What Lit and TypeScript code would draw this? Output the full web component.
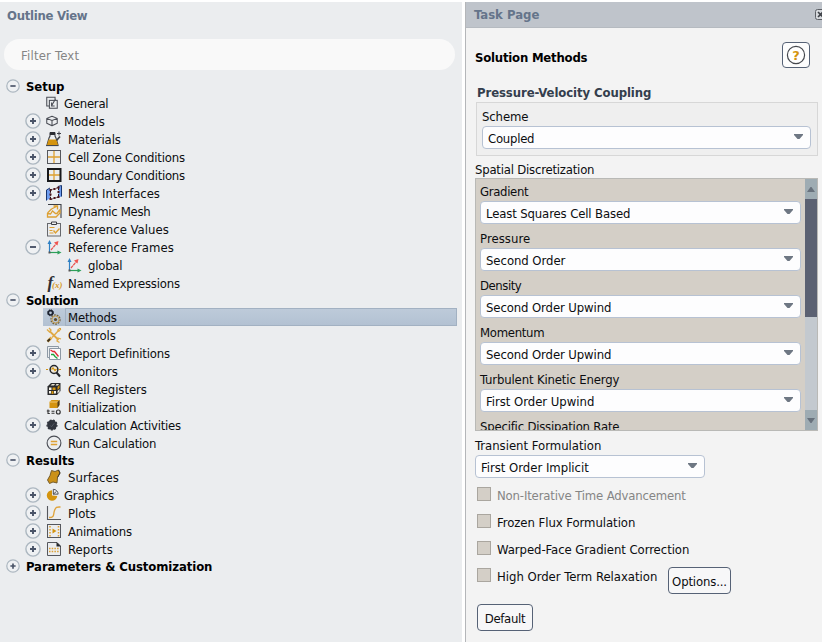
import { LitElement, html, css, svg, nothing, SVGTemplateResult } from "lit";
import { customElement, property, state } from "lit/decorators.js";
import { classMap } from "lit/directives/class-map.js";

const gold = "#d4940f";
const ink = "#3c3f46";

const icons: Record<string, SVGTemplateResult> = {
  general: svg`<g fill="none" stroke="#4a4d55" stroke-width="1.200"><path d="M4.500 11.500H2v-10h9.500V4"/><rect x="5" y="5" width="9" height="9"/><path d="M12 3.500 7.500 11M7.500 7.500v4h3.500"/></g>`,
  models: svg`<g fill="none" stroke="#4a4d55" stroke-width="1.200" stroke-linejoin="round"><path d="M8 2.500 14 5v5.500L8 13.500 2 10.500V5zM2 5l6 2.500L14 5M8 7.500v6"/></g>`,
  materials: svg`<path d="M4 2h5v3l1 2 2 7H1l2-7 1-2z" fill="#eceef0" stroke="${ink}" stroke-width="1.1"/><path d="M4 1h5v3H4z" fill="#2b2d33"/><path d="M2.600 8.500h7.800l1.600 5.500H1z" fill="${gold}"/><path d="M0 14.600h12.500" stroke="${ink}"/><path d="m10.500 9.500 3.500-4" stroke="${ink}" stroke-width="1.600"/><path d="M13 .5v4M11 2.500h4" stroke="${ink}"/>`,
  cell: svg`<path d="M8 1.500v13M1.500 8h13" stroke="#dda032" stroke-width="1.300"/><rect x="1.500" y="1.500" width="13" height="13" fill="none" stroke="#55575d"/>`,
  boundary: svg`<path d="M8 1.500v13M1.500 8h13" stroke="#dda032" stroke-width="1.300"/><rect x="2" y="2" width="12.500" height="12" fill="none" stroke="#17181b" stroke-width="2"/>`,
  mesh: svg`<path d="M.5 5 4 3.500v10L.5 15.500z" fill="#6e9df0"/><path d="m11.500 3 4-2.500v11l-4 1.500z" fill="#6e9df0"/><path d="M.5 15.500V5L4 3M12 1.500l3.500-1v11" fill="none" stroke="#15346f"/><path d="m4.500 5 8-2.500v9.500l-8 2.500z" fill="#eceef0" stroke="#2b0d12" stroke-dasharray="2 1"/><path d="M3.500 4h2v2h-2zM7.500 3h2v2h-2zM11.500 1.500h2v2h-2zM3.500 8.500h2v2h-2zM11.500 6h2v2h-2zM3.500 13h2v2h-2zM7.500 12h2v2h-2zM11.500 11h2v2h-2z" fill="#4a1118"/>`,
  dynamic: svg`<path d="M2 1.500h13V15" fill="none" stroke="${ink}" stroke-width="1.100"/><path d="M1.500 10v4h8.500l4-4V6.500M1.500 10l4-4M1.500 10.500 4.500 11l2-3 3 2.500h1.500l3-4M5.500 6l5-2.500M7.500 3h4v3.500" fill="none" stroke="#dda032" stroke-width="1.300"/>`,
  refvalues: svg`<rect x="1.500" y="2.500" width="13" height="12.500" fill="none" stroke="#66686d"/><path d="M5.500 1h5v2.500h-5z" fill="#eceef0" stroke="${ink}"/><path d="M3.500 6.500h5M3.500 9.500h3M3.500 12h4" stroke="#dda032"/><path d="m7.500 9.500 2 2.500 4-4.500" fill="none" stroke="#dda032" stroke-width="1.400"/>`,
  frames: svg`<path d="M3.500 4v9" stroke="#2f80c4" stroke-width="1.200"/><path d="M1.500 5 3.500 1l2 4z" fill="#2f80c4"/><path d="M4 13.500h8" stroke="#2da05a" stroke-width="1.200"/><path d="m11.500 11.500 4 2-4 2z" fill="#2da05a"/><path d="m5 11 5.500-6.500" stroke="#e8524f" stroke-width="1.200" stroke-dasharray="3 .6"/><path d="m8 3.500 4.500-1.500-1 4.500z" fill="#f05450"/><path d="M2.500 12.500h2v2h-2z" fill="#555"/>`,
  methods: svg`<circle cx="4.500" cy="3.800" r="2.200" fill="none" stroke="#1d2330" stroke-width="1.700"/><circle cx="4.500" cy="3.800" r="3" fill="none" stroke="#1d2330" stroke-dasharray="1.200 1.200"/><circle cx="9.500" cy="10.500" r="4.600" fill="none" stroke="#71613f" stroke-width="1.200" stroke-dasharray="1.800 1"/><circle cx="9.500" cy="10.500" r="3.500" fill="none" stroke="#c49b49"/><circle cx="9.500" cy="10.500" r="1.600" fill="#5a4c30"/>`,
  controls: svg`<path d="M4 4.500 12.500 13" stroke="#e0a943" stroke-width="1.800"/><path d="M1 2.500 3.500 5 5 3 3 1M15 12l-3-1-1 3 2.500 1.500" fill="none" stroke="#e0a943" stroke-width="1.300"/><path d="m6 10.500 7.500-8" stroke="#e0a943" stroke-width="1.400"/><path d="m11 3.500 3-2.500 1 1-2.500 3" fill="none" stroke="#dda032"/><path d="M1.500 14.500 5.500 10.500" stroke="#e0a943" stroke-width="2.600"/><path d="M1.500 14.500 4 12" stroke="#3b3020" stroke-width="1.800"/>`,
  report: svg`<path d="M1.500 1.500h11v11h-11z" fill="#eceef0" stroke="#8d99a5"/><path d="M3.500 3.500h11v11h-11z" fill="#fbfbfc" stroke="#8d99a5"/><path d="m4.500 5 2.500 1.500h1.500l2 2.500 2 2.500" fill="none" stroke="#e02b35" stroke-width="1.300"/><path d="M5 9.500h2.500l1.500 2 2.500 2" fill="none" stroke="#22a33a" stroke-width="1.300"/>`,
  monitors: svg`<path d="M0 6.500h3M13 6.500h3" stroke="${gold}" stroke-dasharray="2 1"/><circle cx="8" cy="6.500" r="3.900" fill="#eee8da" stroke="#24262b" stroke-width="1.500"/><path d="m5.500 6.500 1.500-1.500 2 2.500 1.500-1.500" fill="none" stroke="${gold}" stroke-width="1.200"/><path d="m10.500 9.500 3.500 4" stroke="#24262b" stroke-width="2"/>`,
  registers: svg`<path d="M1.500 5.500 5 2h9.500v8L11 14H1.500z" fill="#292a2c"/><path d="M3 6.500h2.500V9H3zM8 10h2v2.500H8zM3 10h2v2.500H3z" fill="#f4f1e8"/><path d="M6.500 6.500h3V9h-3zM5.500 10h2v3h-2z" fill="${gold}"/><path d="M6 3h3L8 4.500H4.500zM10.500 3H13l-1 1.500H9.500z" fill="#e9e3d1"/><path d="m11.500 6 2-2v3l-2 2z" fill="${gold}"/><path d="m11.500 10 2-2v2.500l-2 2z" fill="#ece8dc"/>`,
  init: svg`<path d="M3.500 3 5.500 1h8v5l-2 3h-8z" fill="${gold}"/><path d="M3.500 3h8l2-2" fill="none" stroke="#f1c874"/><path d="M11.500 3v6l2-3V1z" fill="#4b3c20"/><path d="M2 10.500v4h1.800M.8 12h3M5.500 12.200h3M5.500 14.200h3" fill="none" stroke="#333" stroke-width="1.100"/><ellipse cx="12.300" cy="13" rx="1.900" ry="2" fill="none" stroke="#333" stroke-width="1.200"/>`,
  calc: svg`<circle cx="8" cy="8" r="5.600" fill="#31353d"/><circle cx="8" cy="8" r="5.700" fill="none" stroke="#31353d" stroke-width="1.400" stroke-dasharray="2.200 1.700"/><path d="m6 8.500 1.500 1.500L10.500 6" fill="none" stroke="#565c66"/>`,
  run: svg`<circle cx="8" cy="8" r="6.900" fill="none" stroke="#4a4d55" stroke-width="1.100"/><path d="M4.800 6.500h6.400M4.800 9.500h6.400" stroke="#dda032" stroke-width="1.300"/>`,
  surfaces: svg`<path d="m5.500 1.500 3.500 1L12.500 1l1.500 3-2.500 4.500L11 14l-4-1-3.500 1.500L1.500 11 4 6.500z" fill="#cb9119" stroke="#6b5224" stroke-width=".9"/><path d="M12.500 1 14 4l-2.500 4.500" fill="none" stroke="#3b3831"/>`,
  graphics: svg`<path d="M8 2.500A6 6 0 1 0 14 9L8 8.500z" fill="${gold}"/><path d="M9.500 1.500V7H15A5.500 5.500 0 0 0 9.500 1.500z" fill="#eceef0" stroke="${ink}"/><path d="m9.500 7 3.500-3" stroke="${ink}"/>`,
  plots: svg`<path d="M1.500 1v13.500H15" fill="none" stroke="#55575d" stroke-width="1.100"/><path d="M3 12.500c6 0 4-3 5.500-7s2.500-3.500 6-3.500" fill="none" stroke="#dfa33a" stroke-width="1.300"/>`,
  animations: svg`<rect x="1.500" y="1.500" width="13" height="13" fill="none" stroke="#55575d"/><path d="M4 3v11M12.500 3v11" stroke="#dda032" stroke-width="1.500" stroke-dasharray="1.500 1.500"/><path d="m6.500 5.500 4 2.500-4 2.500z" fill="${gold}"/>`,
  reports: svg`<path d="M1.500 1.500H11l3.500 3.500v9.500h-13z" fill="none" stroke="#55575d"/><path d="M10.500 1v4.500H15z" fill="#26282c"/><path d="M3 7.500h10M3 10.500h10" stroke="#dda032" stroke-width="1.500" stroke-dasharray="1.500 1.200"/>`,
};

/** A one-line text whose tracking is adjusted so that it spans `width` pixels. */
@customElement("fit-text")
class FitText extends LitElement {
  @property() text = "";
  @property({ type: Number }) width = 0;
  @state() spacing = 0;
  static styles = css`
    :host { display: inline-block; white-space: nowrap; }
    .text { display: inline-block; }
  `;
  firstUpdated() {
    const span = this.renderRoot.querySelector(".text") as HTMLElement;
    const natural = span.getBoundingClientRect().width;
    if (this.width && natural) this.spacing = (this.width + 0.3 - natural) / this.text.length;
  }
  render() {
    return html`<span class="text" style="letter-spacing:${this.spacing}px">${this.text}</span>`;
  }
}

const fit = (text: string, width: number) => html`<fit-text .text=${text} .width=${width}></fit-text>`;

interface Row {
  label: string;
  width: number;
  icon?: string;
  sign?: "+" | "-";
  level?: 0 | 1 | 2;
  small?: boolean;
  selected?: boolean;
}

const rows: Row[] = [
  { label: "Setup", width: 38, sign: "-", level: 0 },
  { label: "General", width: 44, icon: "general", small: true },
  { label: "Models", width: 40.5, icon: "models", sign: "+", small: true },
  { label: "Materials", width: 52.5, icon: "materials", sign: "+" },
  { label: "Cell Zone Conditions", width: 116.5, icon: "cell", sign: "+" },
  { label: "Boundary Conditions", width: 116.5, icon: "boundary", sign: "+" },
  { label: "Mesh Interfaces", width: 91.5, icon: "mesh", sign: "+" },
  { label: "Dynamic Mesh", width: 82, icon: "dynamic" },
  { label: "Reference Values", width: 100.5, icon: "refvalues" },
  { label: "Reference Frames", width: 105.5, icon: "frames", sign: "-" },
  { label: "global", width: 34, icon: "frames", level: 2 },
  { label: "Named Expressions", width: 111.5, icon: "fx" },
  { label: "Solution", width: 52, sign: "-", level: 0 },
  { label: "Methods", width: 48.5, icon: "methods", selected: true },
  { label: "Controls", width: 47.5, icon: "controls" },
  { label: "Report Definitions", width: 101.5, icon: "report", sign: "+" },
  { label: "Monitors", width: 49.5, icon: "monitors", sign: "+" },
  { label: "Cell Registers", width: 78.5, icon: "registers" },
  { label: "Initialization", width: 68, icon: "init" },
  { label: "Calculation Activities", width: 116.5, icon: "calc", sign: "+", small: true },
  { label: "Run Calculation", width: 88, icon: "run" },
  { label: "Results", width: 48, sign: "-", level: 0 },
  { label: "Surfaces", width: 50.5, icon: "surfaces" },
  { label: "Graphics", width: 49.5, icon: "graphics", sign: "+", small: true },
  { label: "Plots", width: 27.5, icon: "plots", sign: "+" },
  { label: "Animations", width: 63.5, icon: "animations", sign: "+" },
  { label: "Reports", width: 44.5, icon: "reports", sign: "+" },
  { label: "Parameters & Customization", width: 186, sign: "+", level: 0 },
];

@customElement("outline-tree")
class OutlineTree extends LitElement {
  static styles = css`
    :host { display: block; padding-top: 8px; }
    .row { display: flex; align-items: center; height: 18px; padding-left: 25px; }
    .row.root { height: 16px; padding-left: 6px; font-weight: bold; color: #000; }
    .toggle { width: 16px; height: 16px; flex: none; margin-right: 2px; }
    .root .toggle { width: 14px; height: 14px; margin-right: 4px; }
    .cell { display: flex; align-items: center; height: 18px; flex: 1; margin-right: 5px; }
    .icon { width: 16px; height: 16px; flex: none; margin: 0 4px 0 3px; overflow: visible; }
    .small .icon { width: 14px; height: 14px; margin: 0 4px 0 2px; }
    .nested .icon { margin-left: 23px; }
    .label { padding-left: 2px; flex: 1; height: 18px; line-height: 20px; box-sizing: border-box; }
    .small .label { padding-left: 1px; }
    .selected .cell { background: linear-gradient(#becbda, #b2c1d2); }
    .selected .label { border: 1px solid #a2b1c2; line-height: 18px; }
    .selected .icon { margin-right: 3px; }
    .f { font: italic bold 17px "Liberation Serif", serif; fill: #2e3036; }
    .x { font: italic bold 9px "Liberation Serif", serif; fill: #d49a2a; }
  `;

  toggle(row: Row) {
    if (!row.sign) return html`<span class="toggle"></span>`;
    return html`<svg class="toggle" viewBox="0 0 16 16">
      <circle cx="8" cy="8" r="7.100" fill="#eff1f3" stroke="#acb7c0" stroke-width="1.400"/>
      <path d=${row.sign === "+" ? "M5 8h6M8 5v6" : "M5 8h6"} stroke="#4a5468" stroke-width="1.900"/>
    </svg>`;
  }

  icon(name: string) {
    return html`<svg class="icon" viewBox="0 0 16 16">${name === "fx"
      ? svg`<text class="f" x="1.500" y="12.500">f</text><text class="x" x="6" y="12.500">(x)</text>`
      : icons[name]}</svg>`;
  }

  render() {
    return rows.map((row) => html`
      <div class=${classMap({ row: true, root: row.level === 0, small: !!row.small, nested: row.level === 2, selected: !!row.selected })}>
        ${this.toggle(row)}
        <div class="cell">${row.icon ? this.icon(row.icon) : nothing}<span class="label">${fit(row.label, row.width)}</span></div>
      </div>`);
  }
}

@customElement("drop-down")
class DropDown extends LitElement {
  @property() value = "";
  @property({ type: Number }) span = 0;
  static styles = css`
    :host { display: flex; align-items: center; justify-content: space-between; box-sizing: border-box; height: 23px; padding: 1px 7px 0 5px; background: #fdfdfe; border: 1px solid #b7c2d3; border-radius: 4px; }
    .arrow { width: 9px; height: 5px; margin-bottom: 3px; }
  `;
  render() {
    return html`${fit(this.value, this.span)}<svg class="arrow" viewBox="0 0 9 5"><path d="M0 0h9v1L5.500 5h-2L0 1z" fill="#6e7783"/></svg>`;
  }
}

const schemes: [string, number, string, number][] = [
  ["Gradient", 48, "Least Squares Cell Based", 144],
  ["Pressure", 50, "Second Order", 79],
  ["Density", 41, "Second Order Upwind", 125],
  ["Momentum", 64, "Second Order Upwind", 125],
  ["Turbulent Kinetic Energy", 139, "First Order Upwind", 108],
  ["Specific Dissipation Rate", 139, "", 0],
];

const options = [
  { label: "Non-Iterative Time Advancement", width: 188.5, disabled: true },
  { label: "Frozen Flux Formulation", width: 138 },
  { label: "Warped-Face Gradient Correction", width: 192 },
  { label: "High Order Term Relaxation", width: 160, button: "Options..." },
];

@customElement("app-root")
class AppRoot extends LitElement {
  static styles = css`
    :host { display: grid; grid-template-columns: 462px 357px; column-gap: 3px; box-sizing: border-box; width: 822px; height: 642px; padding-top: 2px; background: #fff; overflow: hidden; font: 13px "DejaVu Sans Condensed", "DejaVu Sans", sans-serif; font-stretch: condensed; color: #0c0d10; white-space: nowrap; }
    .outline { background: #ebedef; }
    .title { height: 26px; line-height: 28px; padding-left: 7px; font-weight: bold; color: #65748a; }
    .filter { height: 31px; line-height: 33px; margin: 11px 7px 0 4px; padding-left: 17px; border-radius: 16px; background: #f9f9f9; color: #858585; }
    .task { display: flex; flex-direction: column; background: #f3f3f3; border-left: 1px solid #b4b6b9; overflow: hidden; }
    .task .title { display: flex; justify-content: space-between; align-items: center; flex: none; padding-left: 8px; background: #bfc4cb; border-bottom: 1px solid #b5bac0; box-sizing: border-box; }
    .close { width: 11px; height: 11px; margin-right: -4px; flex: none; }
    .heading { display: flex; justify-content: space-between; align-items: center; height: 26px; margin: 14px 12px 0 9px; font-weight: bold; color: #000; }
    .heading > fit-text { padding-top: 4px; }
    .help { width: 28px; height: 26px; box-sizing: border-box; border: 1px solid #566276; border-radius: 4px; background: #fdfdfd; display: flex; align-items: center; justify-content: center; }
    .help svg { width: 20px; height: 20px; }
    .q { font: bold 13px "DejaVu Sans", sans-serif; fill: #d4940f; }
    .section { margin: 15px 0 0 11px; height: 19px; line-height: 19px; font-weight: bold; color: #343e4d; }
    .group { margin: 0 4px 0 10px; height: 54px; box-sizing: border-box; border: 1px solid #d7d7d7; background: #efefef; padding: 5px 6px 0 5px; }
    .line { height: 18px; line-height: 18px; }
    .plain { margin: 5px 0 0 9px; height: 17px; line-height: 18px; }
    .scroll { display: grid; grid-template-columns: 1fr 12px; margin: 0 4px 0 9px; height: 253px; box-sizing: border-box; border: 1px solid #b9b9b6; background: #d4cfc7; }
    .list { height: 251px; overflow: hidden; padding: 4px 4px 0 4px; box-sizing: border-box; }
    .entry { height: 47px; }
    .bar { display: flex; flex-direction: column; background: #c3c9cf; }
    .step { height: 20px; background: #9eacb3; display: flex; align-items: center; justify-content: center; }
    .thumb { height: 118px; margin-bottom: 93px; background: #5b6172; }
    .transient { width: 230px; margin: 0 0 0 9px; flex: none; }
    .label { margin: 5px 0 0 9px; height: 19px; line-height: 19px; }
    .checks { margin: 8px 0 0 11px; }
    .check { display: flex; height: 27px; width: 254px; align-items: flex-start; }
    .box { width: 14px; height: 14px; box-sizing: border-box; margin: 1px 6px 0 0; border: 1px solid #aaa69f; background: #d4cfc7; }
    .text { line-height: 20px; }
    .off { color: #858585; }
    .btn { display: flex; align-items: center; justify-content: center; box-sizing: border-box; width: 56px; height: 27px; border: 1px solid #566276; border-radius: 4px; background: #f7f7f8; padding-top: 2px; }
    .check .btn { width: 63px; margin-left: auto; }
    .default { margin: 10px 0 0 11px; }
  `;

  render() {
    return html`
      <div class="outline">
        <div class="title">${fit("Outline View", 80)}</div>
        <div class="filter">${fit("Filter Text", 58)}</div>
        <outline-tree></outline-tree>
      </div>
      <div class="task">
        <div class="title">${fit("Task Page", 65)}
          <svg class="close" viewBox="0 0 11 11"><rect x=".5" y=".5" width="10" height="10" rx="2" fill="#d5d8dc" stroke="#5c6066"/><path d="m3 3 5 5M8 3 3 8" stroke="#3d4147" stroke-width="1.600"/></svg>
        </div>
        <div class="heading">${fit("Solution Methods", 112)}
          <div class="help"><svg viewBox="0 0 20 20"><circle cx="10" cy="10" r="8.600" fill="#fff" stroke="#45484e" stroke-width="1.200"/><text class="q" x="10" y="14.700" text-anchor="middle">?</text></svg></div>
        </div>
        <div class="section">${fit("Pressure-Velocity Coupling", 174)}</div>
        <div class="group"><div class="line">${fit("Scheme", 46)}</div><drop-down .value=${"Coupled"} .span=${46}></drop-down></div>
        <div class="plain">${fit("Spatial Discretization", 119)}</div>
        <div class="scroll">
          <div class="list">${schemes.map(([name, w, value, vw]) => html`<div class="entry"><div class="line">${fit(name, w)}</div>${value ? html`<drop-down .value=${value} .span=${vw}></drop-down>` : nothing}</div>`)}</div>
          <div class="bar">
            <div class="step"><svg width="8" height="5" viewBox="0 0 8 5"><path d="M0 5 3.500 0h1L8 5z" fill="#68727d"/></svg></div>
            <div class="thumb"></div>
            <div class="step"><svg width="8" height="5" viewBox="0 0 8 5"><path d="M0 0h8L4.500 5h-1z" fill="#68727d"/></svg></div>
          </div>
        </div>
        <div class="label">${fit("Transient Formulation", 126)}</div>
        <drop-down class="transient" .value=${"First Order Implicit"} .span=${107.5}></drop-down>
        <div class="checks">${options.map((o) => html`<div class="check"><span class="box"></span><span class=${classMap({ text: true, off: !!o.disabled })}>${fit(o.label, o.width)}</span>${o.button ? html`<div class="btn">${fit(o.button, 54.5)}</div>` : nothing}</div>`)}</div>
        <div class="btn default">${fit("Default", 40)}</div>
      </div>`;
  }
}
